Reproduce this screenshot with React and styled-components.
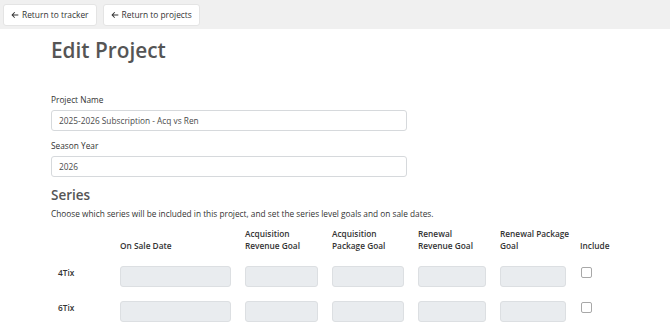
import React from "react";
import styled, { createGlobalStyle } from "styled-components";

const GlobalStyle = createGlobalStyle`
  html, body {
    margin: 0;
    padding: 0;
    background: #ffffff;
  }
  body {
    font-family: "Open Sans", "Liberation Sans", sans-serif;
    color: #333333;
    font-size: 8.3px;
  }
  * {
    box-sizing: border-box;
  }
`;

const TopBar = styled.div`
  display: flex;
  align-items: center;
  gap: 6px;
  height: 29px;
  padding: 0 3px;
  background: #f0f0f0;
`;

const NavButton = styled.button`
  appearance: none;
  cursor: pointer;
  display: flex;
  align-items: center;
  gap: 3px;
  height: 22px;
  padding: 0 7px;
  background: #ffffff;
  border: 1px solid #e4e4e4;
  border-radius: 3px;
  font-family: inherit;
  font-size: 8.4px;
  color: #333333;
`;

const Page = styled.div`
  padding: 0 0 0 51px;
`;

const Title = styled.h1`
  margin: 6px 0 29px;
  font-size: 20.8px;
  font-weight: 600;
  line-height: 30px;
  color: #555555;
`;

const Field = styled.div`
  width: 356px;
  margin-bottom: 9px;
`;

const Label = styled.label`
  display: block;
  margin-bottom: 4px;
  font-size: 8.3px;
  line-height: 12px;
  color: #333333;
`;

const TextInput = styled.input`
  display: block;
  width: 100%;
  height: 21px;
  padding: 0 7px;
  border: 1px solid #d6d9dc;
  border-radius: 3px;
  font-family: inherit;
  font-size: 8.3px;
  color: #4a4a4a;
  background: #ffffff;
`;

const SectionTitle = styled.h2`
  margin: 5px 0 4px;
  font-size: 13.5px;
  font-weight: 600;
  line-height: 18px;
  color: #555555;
`;

const Note = styled.p`
  margin: 0 0 7px;
  font-size: 8.3px;
  line-height: 12px;
  color: #333333;
`;

const SeriesGrid = styled.div`
  display: grid;
  grid-template-columns: 62px 125px 87px 86px 82px 80px 60px;
  width: max-content;
`;

const HeadCell = styled.div`
  display: flex;
  align-items: flex-end;
  padding: 0 7px;
  height: 25px;
  font-size: 8.3px;
  font-weight: 600;
  line-height: 12px;
  white-space: nowrap;
  color: #333333;
`;

const Cell = styled.div`
  height: 35px;
  padding: ${(p) => (p.$label ? "15px 7px 0" : "14px 7px 0")};
  font-size: 8.3px;
  font-weight: ${(p) => (p.$label ? 600 : 400)};
  line-height: 12px;
  color: #333333;
`;

const GoalInput = styled.input`
  display: block;
  width: 100%;
  height: 21px;
  border: 1px solid #dcdfe2;
  border-radius: 3px;
  background: #e9ecef;
`;

const Check = styled.input.attrs({ type: "checkbox" })`
  appearance: none;
  display: block;
  margin: 1px 0 0 1px;
  width: 11px;
  height: 11px;
  border: 1px solid #a8a8a8;
  border-radius: 2px;
  background: #ffffff;
`;

function ArrowLeft() {
  return (
    <svg width="8" height="8" viewBox="0 0 448 512" aria-hidden="true">
      <path
        fill="#333"
        d="M9.4 233.4c-12.5 12.5-12.5 32.8 0 45.3l160 160c12.5 12.5 32.8 12.5 45.3 0s12.5-32.8 0-45.3L109.2 288 416 288c17.7 0 32-14.3 32-32s-14.3-32-32-32l-306.7 0L214.6 118.6c12.5-12.5 12.5-32.8 0-45.3s-32.8-12.5-45.3 0l-160 160z"
      />
    </svg>
  );
}

const columns = [
  ["On Sale Date"],
  ["Acquisition", "Revenue Goal"],
  ["Acquisition", "Package Goal"],
  ["Renewal", "Revenue Goal"],
  ["Renewal Package", "Goal"],
  ["Include"],
];

const series = ["4Tix", "6Tix"];

export default function App() {
  return (
    <>
      <GlobalStyle />
      <TopBar>
        <NavButton type="button">
          <ArrowLeft />
          Return to tracker
        </NavButton>
        <NavButton type="button">
          <ArrowLeft />
          Return to projects
        </NavButton>
      </TopBar>
      <Page>
        <Title>Edit Project</Title>
        <Field>
          <Label>Project Name</Label>
          <TextInput defaultValue="2025-2026 Subscription - Acq vs Ren" />
        </Field>
        <Field>
          <Label>Season Year</Label>
          <TextInput defaultValue="2026" />
        </Field>
        <SectionTitle>Series</SectionTitle>
        <Note>
          Choose which series will be included in this project, and set the
          series level goals and on sale dates.
        </Note>
        <SeriesGrid>
          <HeadCell />
          {columns.map((lines) => (
            <HeadCell key={lines.join(" ")}>
              <div>
                {lines.map((l) => (
                  <div key={l}>{l}</div>
                ))}
              </div>
            </HeadCell>
          ))}
          {series.map((name) => (
            <React.Fragment key={name}>
              <Cell $label>{name}</Cell>
              {[0, 1, 2, 3, 4].map((i) => (
                <Cell key={i}>
                  <GoalInput disabled />
                </Cell>
              ))}
              <Cell>
                <Check />
              </Cell>
            </React.Fragment>
          ))}
        </SeriesGrid>
      </Page>
    </>
  );
}
